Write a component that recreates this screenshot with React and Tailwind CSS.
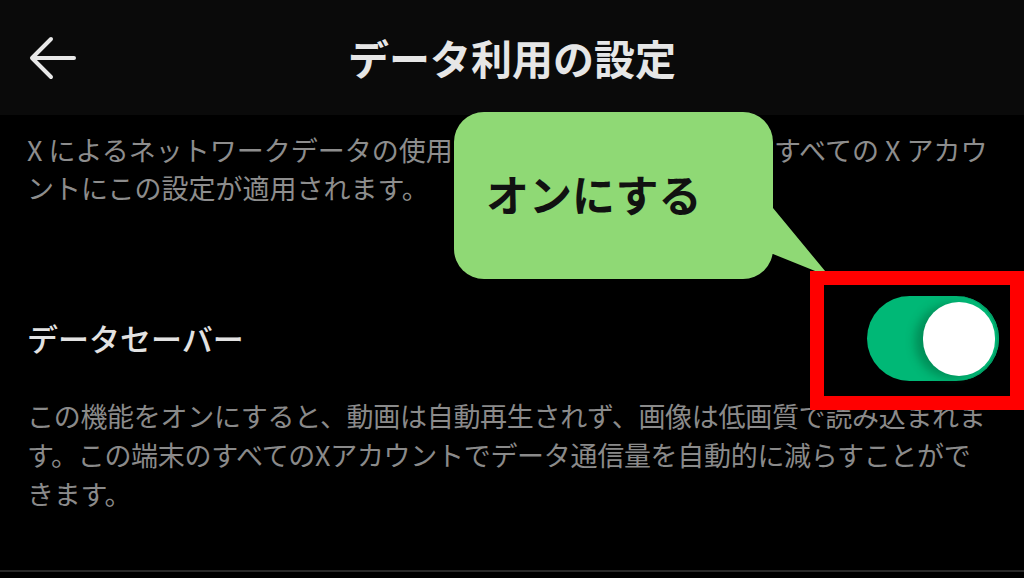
import React from 'react';

const BackArrow = () => (
    <svg width="48" height="44" viewBox="0 0 48 44" fill="none" stroke="#e8e8e8" strokeWidth="4" strokeLinecap="round" strokeLinejoin="round">
        <path d="M45 22H4" />
        <path d="M22 3L3 22l19 19" />
    </svg>
);

const Toggle = () => (
    <div className="w-[132px] h-[85px] rounded-full bg-[#00b876] shadow-[inset_-2px_0_0_#03a067] flex items-center justify-end pr-[4px]">
        <div className="w-[72px] h-[74px] rounded-full bg-white shadow-[-8px_2px_10px_rgba(0,90,50,0.45)]" />
    </div>
);

export default function App() {
    return (
        <div className="relative w-[1024px] h-[578px] overflow-hidden bg-black font-['Noto_Sans_CJK_JP',sans-serif]">
            {/* Header */}
            <div className="h-[115px] bg-[#0a0a0a] flex items-center px-[29px]">
                <BackArrow />
                <h1 className="flex-1 text-center text-[41px] font-bold text-[#e6e6e6]">データ利用の設定</h1>
                <div className="w-[48px]" />
            </div>

            {/* Body */}
            <div className="pl-[27px] pr-[25px] pt-[16px]">
                <p className="text-[27px] leading-[38px] text-[#8d8d8d] whitespace-nowrap">
                    X によるネットワークデータの使用を管理します。この端末のすべての X アカウ
                    <br />
                    ントにこの設定が適用されます。
                </p>

                <div className="mt-[89px] flex items-center justify-between">
                    <span className="text-[31px] font-medium text-[#e2e2e2]">データセーバー</span>
                    <Toggle />
                </div>

                <p className="mt-[15px] text-[27px] leading-[39px] text-[#8a8a8a] whitespace-nowrap tracking-[-0.3px]">
                    この機能をオンにすると、動画は自動再生されず、画像は低画質で読み込まれま
                    <br />
                    す。この端末のすべてのXアカウントでデータ通信量を自動的に減らすことがで
                    <br />
                    きます。
                </p>
            </div>

            <div className="mt-[57px] h-[2px] bg-[#2a2a2a]" />

            {/* Callout overlay */}
            <div className="absolute left-[454px] top-[112px] w-[319px] h-[167px] rounded-[30px] bg-[#8fd975] pl-[32px] pt-[56px]">
                <span className="text-[43px] leading-[50px] font-bold text-[#111]">オンにする</span>
            </div>
            <svg className="absolute left-[760px] top-[200px]" width="75" height="82" viewBox="0 0 75 82">
                <polygon points="0,8 13,8 70,77 13,54 0,54" fill="#8fd975" />
            </svg>

            {/* Red highlight box */}
            <div className="absolute left-[810px] top-[271px] w-[214px] h-[139px] border-[14px] border-[#ff0000]" />
        </div>
    );
}
